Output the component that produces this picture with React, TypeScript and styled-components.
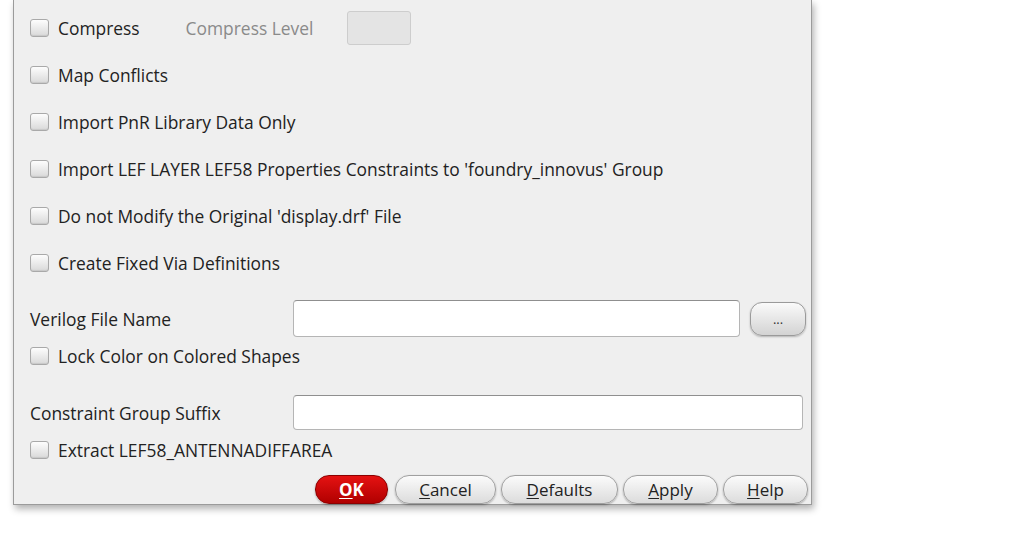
import React from 'react';
import styled, { createGlobalStyle } from 'styled-components';

const GlobalStyle = createGlobalStyle`
  html, body {
    margin: 0;
    padding: 0;
    background: #ffffff;
  }
  body {
    font-family: "Open Sans", "DejaVu Sans", sans-serif;
    font-size: 17.4px;
    color: #222222;
  }
`;

const Page = styled.div`
  width: 1013px;
  height: 536px;
  overflow: hidden;
`;

const Dialog = styled.div`
  margin-left: 13px;
  width: 799px;
  height: 505px;
  padding: 4px 0 0 16px;
  box-sizing: border-box;
  display: flex;
  flex-direction: column;
  background: #efefef;
  border: 1px solid #9b9b9b;
  border-top: none;
  box-shadow: 2px 4px 7px rgba(0, 0, 0, 0.3);
`;

const CheckRow = styled.div<{ $h?: number; $top?: number }>`
  display: flex;
  align-items: center;
  height: ${p => p.$h ?? 47}px;
  margin-top: ${p => p.$top ?? 0}px;
`;

const Box = styled.span`
  width: 17px;
  height: 16px;
  margin-right: 9px;
  border: 1px solid #a9a9a9;
  border-radius: 3px;
  background: linear-gradient(#fdfdfd, #d9d9d9);
  box-shadow: inset 0 -1px 1px rgba(0, 0, 0, 0.08);
  flex-shrink: 0;
`;

const Label = styled.span<{ $muted?: boolean }>`
  color: ${p => (p.$muted ? '#8a8a8a' : '#222222')};
  white-space: nowrap;
`;

const LevelLabel = styled(Label)`
  margin-left: 46px;
`;

const LevelBox = styled.div`
  width: 64px;
  height: 34px;
  margin-left: 34px;
  border: 1px solid #cdcdcd;
  border-radius: 3px;
  background: #e4e4e4;
  box-sizing: border-box;
`;

const FieldRow = styled.div<{ $top: number; $h: number }>`
  display: flex;
  align-items: center;
  height: ${p => p.$h}px;
  margin-top: ${p => p.$top}px;
`;

const FieldLabel = styled.span`
  width: 263px;
  white-space: nowrap;
`;

const TextInput = styled.div<{ $w: number }>`
  width: ${p => p.$w}px;
  height: 100%;
  box-sizing: border-box;
  background: #ffffff;
  border: 1px solid #b5b5b5;
  border-top-color: #8f8f8f;
  border-radius: 4px;
`;

const Browse = styled.button`
  width: 56px;
  height: 34px;
  margin-left: 10px;
  border: 1px solid #9a9a9a;
  border-radius: 12px;
  background: linear-gradient(#fafafa, #d3d3d3);
  box-shadow: 0 1px 2px rgba(0, 0, 0, 0.25);
  font-family: inherit;
  font-size: 13px;
  color: #333;
  padding: 0;
`;

const ButtonBar = styled.div`
  display: flex;
  justify-content: flex-end;
  gap: 5px;
  height: 29px;
  margin-top: 12px;
  padding-right: 3px;
`;

const DlgButton = styled.button<{ $w: number; $primary?: boolean }>`
  width: ${p => p.$w}px;
  height: 29px;
  padding: 0;
  border-radius: 14px;
  font-family: inherit;
  font-size: 17px;
  border: 1px solid ${p => (p.$primary ? '#8c0000' : '#a0a0a0')};
  background: ${p =>
    p.$primary
      ? 'linear-gradient(#e51212, #b00000)'
      : 'linear-gradient(#fbfbfb, #dcdcdc)'};
  color: ${p => (p.$primary ? '#ffffff' : '#222222')};
  font-weight: ${p => (p.$primary ? 700 : 400)};
  box-shadow: 0 1px 2px rgba(0, 0, 0, 0.3);
  &:first-child {
    margin-right: 2px;
  }
  u {
    text-decoration-thickness: 1px;
    text-underline-offset: 2px;
  }
`;

const checks = [
  'Map Conflicts',
  'Import PnR Library Data Only',
  "Import LEF LAYER LEF58 Properties Constraints to 'foundry_innovus' Group",
  "Do not Modify the Original 'display.drf' File",
  'Create Fixed Via Definitions',
];

const buttons = [
  { key: 'O', rest: 'K', w: 73, primary: true },
  { key: 'C', rest: 'ancel', w: 101 },
  { key: 'D', rest: 'efaults', w: 117 },
  { key: 'A', rest: 'pply', w: 95 },
  { key: 'H', rest: 'elp', w: 85 },
];

export default function App() {
  return (
    <Page>
      <GlobalStyle />
      <Dialog>
        <CheckRow>
          <Box />
          <Label>Compress</Label>
          <LevelLabel $muted>Compress Level</LevelLabel>
          <LevelBox />
        </CheckRow>
        {checks.map(c => (
          <CheckRow key={c}>
            <Box />
            <Label>{c}</Label>
          </CheckRow>
        ))}
        <FieldRow $top={14} $h={37}>
          <FieldLabel>Verilog File Name</FieldLabel>
          <TextInput $w={447} />
          <Browse>...</Browse>
        </FieldRow>
        <CheckRow $h={26} $top={6}>
          <Box />
          <Label>Lock Color on Colored Shapes</Label>
        </CheckRow>
        <FieldRow $top={26} $h={35}>
          <FieldLabel>Constraint Group Suffix</FieldLabel>
          <TextInput $w={510} />
        </FieldRow>
        <CheckRow $h={26} $top={7}>
          <Box />
          <Label>Extract LEF58_ANTENNADIFFAREA</Label>
        </CheckRow>
        <ButtonBar>
          {buttons.map(b => (
            <DlgButton key={b.key} $w={b.w} $primary={b.primary}>
              <u>{b.key}</u>
              {b.rest}
            </DlgButton>
          ))}
        </ButtonBar>
      </Dialog>
    </Page>
  );
}
